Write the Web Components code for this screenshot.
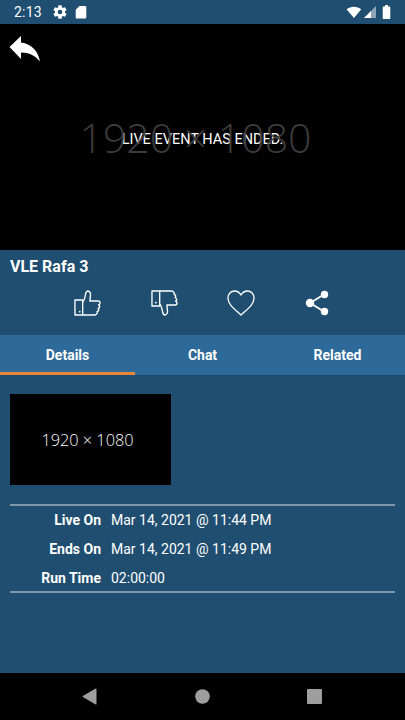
<!DOCTYPE html>
<html>
<head>
<meta charset="utf-8">
<title>VLE Rafa 3</title>
<style>
  html, body { margin: 0; padding: 0; height: 100%; background: #1f4e70; }
  body { font-family: Roboto, "Liberation Sans", sans-serif; color: #fff; overflow: hidden; }
  event-screen { height: 720px; }
</style>
</head>
<body>
<event-screen>
  <status-bar></status-bar>
  <video-player></video-player>
  <action-bar title="VLE Rafa 3"></action-bar>
  <tab-strip></tab-strip>
  <details-pane>
    <detail-row label="Live On">Mar 14, 2021 @ 11:44 PM</detail-row>
    <detail-row label="Ends On">Mar 14, 2021 @ 11:49 PM</detail-row>
    <detail-row label="Run Time">02:00:00</detail-row>
  </details-pane>
  <nav-bar></nav-bar>
</event-screen>

<script>
class EventScreen extends HTMLElement {
    constructor() {
        super();
        this.attachShadow({ mode: 'open' });
        this.shadowRoot.innerHTML = `
      <style>
        :host { display: flex; flex-direction: column; background: #1f4e70; }
      </style>
      <slot></slot>
    `;
    }
}

class StatusBar extends HTMLElement {
    constructor() {
        super();
        this.attachShadow({ mode: 'open' });
        this.shadowRoot.innerHTML = `
      <style>
        :host { display: flex; align-items: center; height: 24px; padding: 0 14px 0 14px; flex: none;
          font: 400 14px Roboto, sans-serif; color: #fff; }
        .time { letter-spacing: .2px; margin-right: 10px; }
        .spacer { flex: 1; }
        svg { display: block; fill: #fff; }
      </style>
      <span class="time">2:13</span>
      <svg width="16" height="16" viewBox="0 0 24 24" style="margin-right:7px"><path d="M19.4 13c.04-.32.1-.66.1-1s-.06-.68-.1-1l2.1-1.65c.2-.15.25-.42.12-.64l-2-3.46c-.12-.22-.39-.3-.61-.22l-2.49 1c-.52-.4-1.08-.73-1.69-.98l-.38-2.65A.49.49 0 0 0 14 2h-4c-.25 0-.46.18-.49.42l-.38 2.65c-.61.25-1.17.59-1.69.98l-2.49-1a.5.5 0 0 0-.61.22l-2 3.46c-.13.22-.07.49.12.64L4.56 11c-.04.32-.06.66-.06 1s.02.68.06 1l-2.1 1.65c-.2.15-.25.42-.12.64l2 3.46c.12.22.39.3.61.22l2.49-1c.52.4 1.08.73 1.69.98l.38 2.65c.03.24.24.42.49.42h4c.25 0 .46-.18.49-.42l.38-2.65c.61-.25 1.17-.59 1.69-.98l2.49 1c.22.08.49 0 .61-.22l2-3.46c.12-.22.07-.49-.12-.64L19.4 13zM12 15.5a3.5 3.5 0 1 1 0-7 3.5 3.5 0 0 1 0 7z"/></svg>
      <svg width="12" height="14" viewBox="0 0 12 14"><path d="M4.5 1H10c.8 0 1.300.5 1.300 1.300v9.900c0 .8-.5 1.300-1.300 1.300H2c-.8 0-1.300-.5-1.300-1.300V4.800z"/></svg>
      <span class="spacer"></span>
      <svg width="16" height="13" viewBox="0 0 18 14" style="margin-right:1px"><path d="M.6 3.400C2.900 1.500 5.800.5 8.900.5s6 1 8.300 2.900L8.900 13.300z"/></svg>
      <svg width="14" height="14" viewBox="0 0 14 14" style="margin-right:5px"><path d="M1 13 13 1v12z" fill="#8fa6b7"/><path d="M1 13l7-7v7z"/></svg>
      <svg width="9" height="14" viewBox="0 0 9 14"><path d="M3 0h3v1.500h1.300c.6 0 1 .4 1 1V13c0 .6-.4 1-1 1H1.700c-.6 0-1-.4-1-1V2.500c0-.6.4-1 1-1H3z"/></svg>
    `;
    }
}

class VideoPlayer extends HTMLElement {
    constructor() {
        super();
        this.attachShadow({ mode: 'open' });
        this.shadowRoot.innerHTML = `
      <style>
        :host { display: grid; place-items: center; position: relative; height: 226px; background: #000; flex: none; }
        .placeholder { grid-area: 1 / 1; margin-right: 14px; opacity: .99; font: 300 41px "Open Sans", sans-serif; color: #3d3d3d; white-space: nowrap; }
        .message { grid-area: 1 / 1; margin-top: 5px; font: 400 14.500px Roboto, sans-serif; color: #fff; white-space: nowrap; }
        .back { position: absolute; left: 9px; top: 12px; display: block; fill: #fff; }
      </style>
      <svg class="back" width="32" height="26" viewBox="0 0 32 26"><path d="M12 0 .5 11 12 23v-6.500c8 0 14 3 19 9C29 15 23 8 12 6.500z"/></svg>
      <span class="placeholder">1920 × 1080</span>
      <span class="message">LIVE EVENT HAS ENDED.</span>
    `;
    }
}

class ActionBar extends HTMLElement {
    constructor() {
        super();
        const hand = 'M9 12C11 10 11.500 7 12 4 12.500 2 13.500 1 14.500 1 16.500 1.500 17.500 3.500 17 6L16.500 11H25c1.500 0 2 1 2 2s-.5 1.500-1.500 2c1 .3 1.300 1.200 1 2-.2.800-.8 1.200-1.500 1.400.7.500.8 1.300.5 2-.3.700-1 1-1.500 1.100.4.600.3 1.500-.2 2-.5.600-1.300 1.500-2 1.500H9';
        this.attachShadow({ mode: 'open' });
        this.shadowRoot.innerHTML = `
      <style>
        :host { display: block; height: 85px; flex: none; box-sizing: border-box; padding: 7px 10px 0; }
        .title { font: 700 16px/19px Roboto, sans-serif; color: #fff; }
        .icons { display: flex; justify-content: space-between; width: 255px; margin: 14px 0 0 64px; }
        svg { display: block; fill: none; stroke: #fff; stroke-width: 1.400; stroke-linejoin: round; }
      </style>
      <div class="title"></div>
      <div class="icons">
        <svg width="27" height="26" viewBox="0 0 28 26" preserveAspectRatio="none"><rect x="1" y="10" width="8" height="15"/><path d="${hand}"/><circle cx="6" cy="21.700" r=".9" fill="#fff" stroke="none"/></svg>
        <svg width="27" height="26" viewBox="0 0 28 26" preserveAspectRatio="none"><g transform="matrix(1 0 0 -1 0 26)"><rect x="1" y="10" width="8" height="15"/><path d="${hand}"/><circle cx="5" cy="13.300" r=".9" fill="#fff" stroke="none"/></g></svg>
        <svg width="28" height="26" viewBox="0 0 29 26" preserveAspectRatio="none"><path d="M14.500 25C9 20 1 15 1 8c0-4 3-7 6.800-7 2.800 0 5.200 1.500 6.700 4 1.500-2.500 3.900-4 6.700-4C25 1 28 4 28 8c0 7-8 12-13.500 17z"/></svg>
        <svg width="24" height="26" viewBox="0 0 24 26"><path d="M5 13 19 4.500M5 13l14 8.500" stroke-width="2"/><g fill="#fff" stroke="none"><circle cx="5" cy="13" r="4.200"/><circle cx="19.500" cy="4.500" r="3.700"/><circle cx="19.500" cy="21.500" r="3.700"/></g></svg>
      </div>
    `;
        this.shadowRoot.querySelector('.title').textContent = this.getAttribute('title');
    }
}

class TabStrip extends HTMLElement {
    constructor() {
        super();
        this.attachShadow({ mode: 'open' });
        this.shadowRoot.innerHTML = `
      <style>
        :host { display: grid; grid-template-columns: repeat(3, 1fr); height: 40px; background: #2d6a99; flex: none; }
        div { display: flex; align-items: center; justify-content: center; box-sizing: border-box;
          font: 700 14px Roboto, sans-serif; color: #fff; padding-bottom: 1px; }
        .active { border-bottom: 3px solid #e8873a; padding: 2px 0 0; }
      </style>
      <div class="active">Details</div>
      <div>Chat</div>
      <div>Related</div>
    `;
    }
}

class DetailsPane extends HTMLElement {
    constructor() {
        super();
        this.attachShadow({ mode: 'open' });
        this.shadowRoot.innerHTML = `
      <style>
        :host { display: block; flex: 1; padding: 19px 10px 0; }
        .thumb { display: flex; align-items: center; justify-content: center; box-sizing: border-box; width: 161px; height: 91px; background: #000;
          padding-right: 6px; font: 300 16.300px "Open Sans", sans-serif; color: #fff; }
        .thumb span { opacity: .99; }
        .rows { box-sizing: border-box; margin-top: 19px; border-top: 2px solid #7f97aa; border-bottom: 2px solid #7f97aa; height: 89px; }
      </style>
      <div class="thumb"><span>1920 × 1080</span></div>
      <div class="rows"><slot></slot></div>
    `;
    }
}

class DetailRow extends HTMLElement {
    constructor() {
        super();
        this.attachShadow({ mode: 'open' });
        this.shadowRoot.innerHTML = `
      <style>
        :host { display: flex; align-items: center; box-sizing: border-box; height: 29px; padding-bottom: 2px; font: 400 14px Roboto, sans-serif; color: #fff; }
        .label { width: 91px; margin-right: 10px; text-align: right; font-weight: 700; }
      </style>
      <span class="label"></span>
      <slot></slot>
    `;
        this.shadowRoot.querySelector('.label').textContent = this.getAttribute('label');
    }
}

class NavBar extends HTMLElement {
    constructor() {
        super();
        this.attachShadow({ mode: 'open' });
        this.shadowRoot.innerHTML = `
      <style>
        :host { display: flex; align-items: center; justify-content: space-between; height: 47px; background: #000; flex: none;
          padding: 0 83px 0 82px; }
        svg { display: block; fill: #9e9e9e; }
      </style>
      <svg width="15" height="17" viewBox="0 0 15 17"><path d="M14.500 1v15c0 .5-.4.700-.8.500L.8 9c-.4-.2-.4-.7 0-1L13.700.5c.4-.2.800 0 .8.500z"/></svg>
      <svg width="15" height="15" viewBox="0 0 15 15"><circle cx="7.500" cy="7.500" r="7.300"/></svg>
      <svg width="15" height="15" viewBox="0 0 15 15"><rect width="15" height="15" rx="1"/></svg>
    `;
    }
}

customElements.define('event-screen', EventScreen);
customElements.define('status-bar', StatusBar);
customElements.define('video-player', VideoPlayer);
customElements.define('action-bar', ActionBar);
customElements.define('tab-strip', TabStrip);
customElements.define('details-pane', DetailsPane);
customElements.define('detail-row', DetailRow);
customElements.define('nav-bar', NavBar);
</script>
</body>
</html>
